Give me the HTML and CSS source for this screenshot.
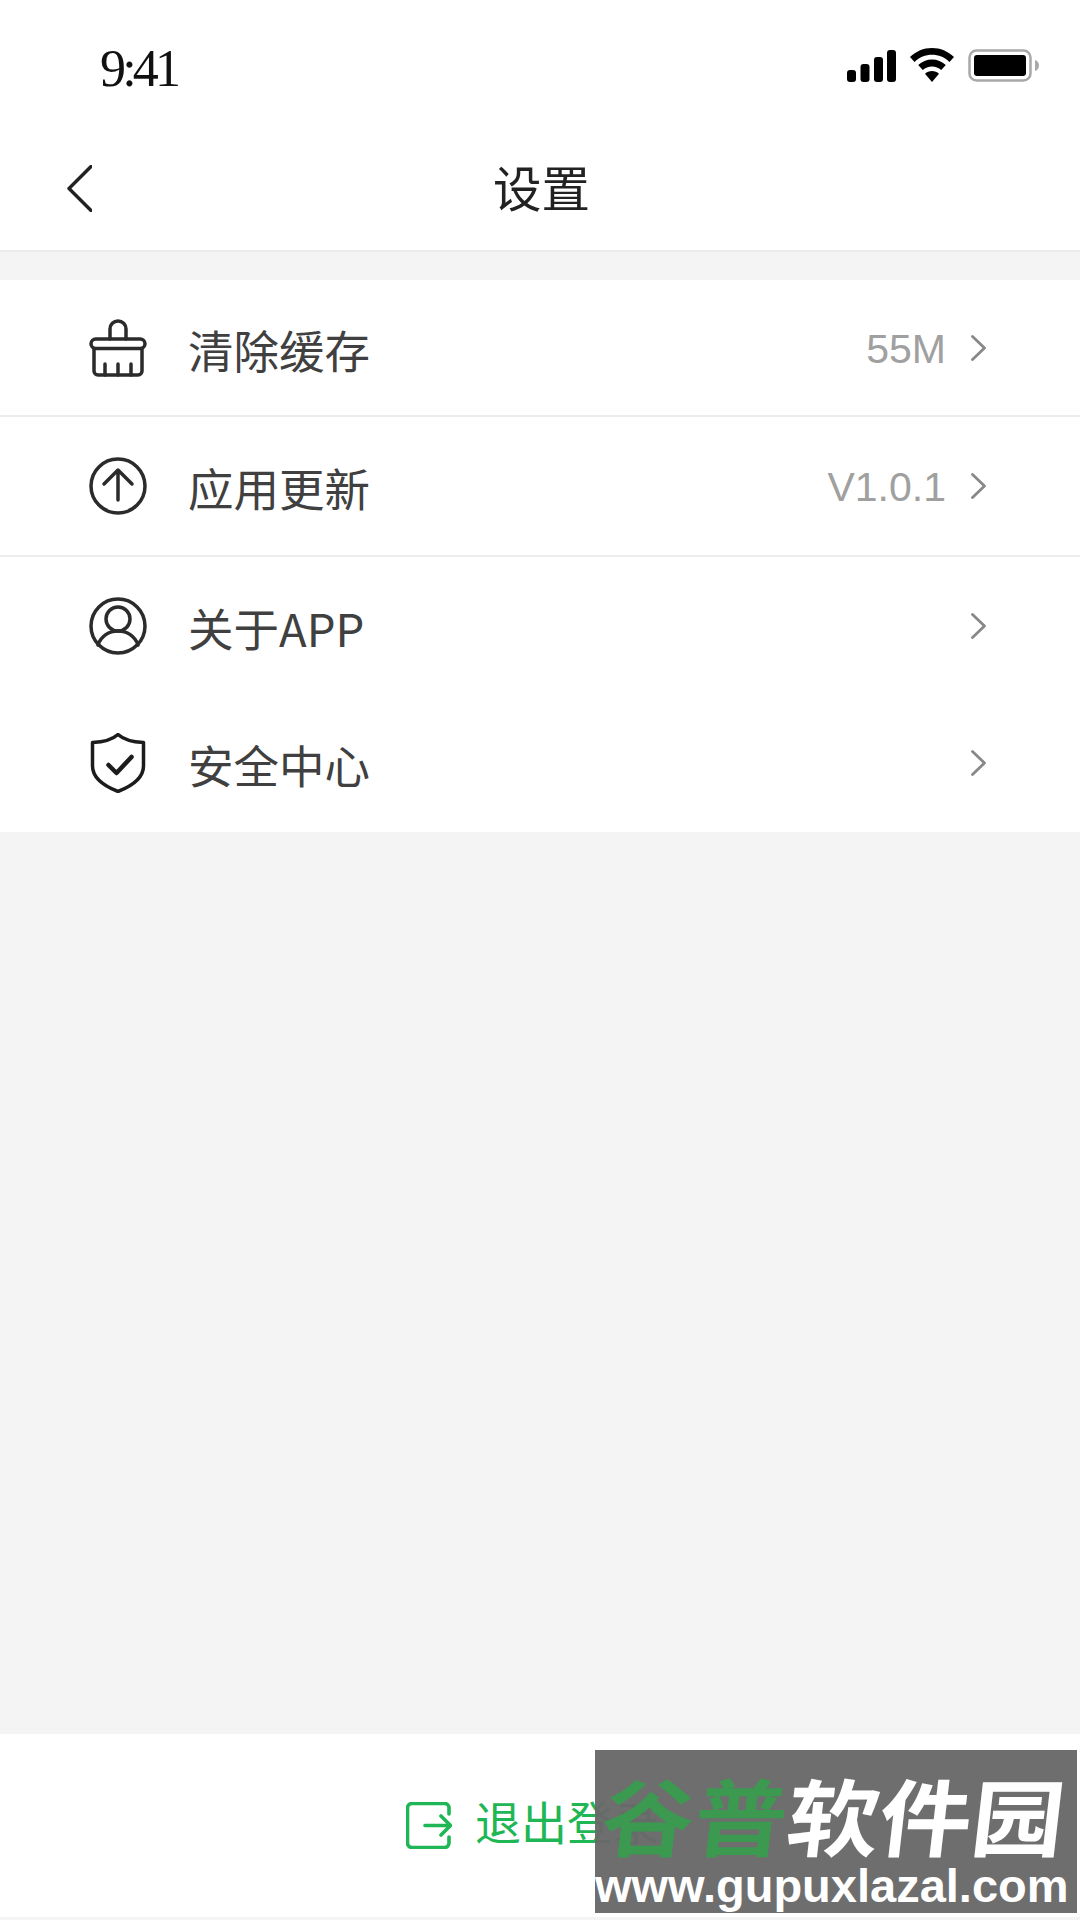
FILE: index.html
```html
<!DOCTYPE html>
<html lang="zh-CN">
<head>
<meta charset="utf-8">
<title>设置</title>
<link rel="stylesheet" href="styles.css">
</head>
<body>
<div class="page">
  <header class="top">
    <div class="status">
      <span class="time">9:41</span>
      <div class="status-icons">
        <svg class="sig" viewBox="0 0 49 32"><rect x="0" y="20" width="9" height="12" rx="3"/><rect x="13.500" y="14" width="9" height="18" rx="3"/><rect x="27" y="7" width="9" height="25" rx="3"/><rect x="40" y="0" width="9" height="32" rx="3"/></svg>
        <svg class="wifi" viewBox="0 0 44 34"><path d="M22 0C13.500 0 6 3.300 0 9l4.500 5C9.500 9.300 15.500 6.800 22 6.800S34.500 9.300 39.500 14L44 9C38 3.300 30.500 0 22 0z"/><path d="M22 11.500c-5.200 0-10 2-13.800 5.500l4.600 5c2.500-2.200 5.700-3.600 9.200-3.600s6.700 1.400 9.200 3.600l4.600-5C32 13.500 27.200 11.500 22 11.500z"/><path d="M22 23c-2.700 0-5.100 1-7 2.700L22 34l7-8.300C27.100 24 24.700 23 22 23z"/></svg>
        <svg class="batt" viewBox="0 0 71 33"><rect x="1.500" y="1.500" width="61" height="30" rx="7" fill="none" stroke="#a8a8a8" stroke-width="2.500"/><rect x="6" y="6" width="52" height="21" rx="3"/><path d="M67 11c2.500.8 4 3 4 5.500S69.500 21.200 67 22z" fill="#a8a8a8"/></svg>
      </div>
    </div>
    <nav class="nav">
      <svg class="back" viewBox="0 0 25 47"><path d="M24 1.500 2 23.500l22 22" fill="none" stroke="#222" stroke-width="3.400" stroke-linecap="round" stroke-linejoin="round"/></svg>
      <h1 class="title">设置</h1>
    </nav>
  </header>

  <main class="main">
    <section class="list">
      <div class="row row-a">
        <svg class="ico" viewBox="0 0 58 58"><g fill="none" stroke="#2b2b2b" stroke-width="3.500" stroke-linecap="round" stroke-linejoin="round"><path d="M21 20V10a8 8 0 0 1 16 0V20"/><rect x="2" y="20" width="54" height="9.500" rx="4.700"/><path d="M5 29.500V52a4 4 0 0 0 4 4h40a4 4 0 0 0 4-4V29.500"/><path d="M16 56V45M29 56V45M42 56V45"/></g></svg>
        <span class="label">清除缓存</span>
        <span class="value">55M</span>
        <svg class="chev" viewBox="0 0 15 26"><path d="M1.500 1.500 13.500 13 1.500 24.500" fill="none" stroke="#888" stroke-width="2.800" stroke-linecap="round" stroke-linejoin="round"/></svg>
      </div>
      <div class="row row-b">
        <svg class="ico" viewBox="0 0 58 58"><g fill="none" stroke="#2b2b2b" stroke-width="3.500" stroke-linecap="round" stroke-linejoin="round"><circle cx="29" cy="29" r="27"/><path d="M29 43V14M15 27 29 13l14 14"/></g></svg>
        <span class="label">应用更新</span>
        <span class="value">V1.0.1</span>
        <svg class="chev" viewBox="0 0 15 26"><path d="M1.500 1.500 13.500 13 1.500 24.500" fill="none" stroke="#888" stroke-width="2.800" stroke-linecap="round" stroke-linejoin="round"/></svg>
      </div>
      <div class="row row-c">
        <svg class="ico" viewBox="0 0 58 58"><g fill="none" stroke="#2b2b2b" stroke-width="3.500" stroke-linecap="round" stroke-linejoin="round"><circle cx="29" cy="29" r="27"/><circle cx="29" cy="22" r="12"/><path d="M9 48c3-9 11-14 20-14s17 5 20 14"/></g></svg>
        <span class="label">关于APP</span>
        <svg class="chev" viewBox="0 0 15 26"><path d="M1.500 1.500 13.500 13 1.500 24.500" fill="none" stroke="#888" stroke-width="2.800" stroke-linecap="round" stroke-linejoin="round"/></svg>
      </div>
      <div class="row row-d">
        <svg class="ico" viewBox="0 0 58 60"><g fill="none" stroke="#1c1c1c" stroke-width="3.500" stroke-linecap="round" stroke-linejoin="round"><path d="M29 1.500C24 6 15 9 3.500 9.500V33C3.500 45 15 53 29 58.500 43 53 54.500 45 54.500 33V9.500C43 9 34 6 29 1.500z"/><path d="M19.500 32l8 8L42.500 24" stroke-width="4.500"/></g></svg>
        <span class="label">安全中心</span>
        <svg class="chev" viewBox="0 0 15 26"><path d="M1.500 1.500 13.500 13 1.500 24.500" fill="none" stroke="#888" stroke-width="2.800" stroke-linecap="round" stroke-linejoin="round"/></svg>
      </div>
    </section>
  </main>

  <footer class="foot">
    <svg class="out" viewBox="0 0 46 47"><g fill="none" stroke="#1fb655" stroke-width="3.600" stroke-linecap="round" stroke-linejoin="round"><path d="M43 12V6a4.500 4.500 0 0 0-4.500-4.500H6A4.500 4.500 0 0 0 1.500 6v35A4.500 4.500 0 0 0 6 45.500h32.500A4.500 4.500 0 0 0 43 41v-6"/><path d="M19 23.500h25M35 14l9.500 9.500L35 33"/></g></svg>
    <span class="logout">退出登录</span>
  </footer>

  <aside class="mark">
    <div class="mark-cn"><span class="mark-green">谷普</span>软件园</div>
    <div class="mark-url">www.gupuxlazal.com</div>
  </aside>
</div>
</body>
</html>
```
FILE: styles.css
```css
* { box-sizing: border-box; }
html, body { margin: 0; padding: 0; }
body { background: #f4f4f4; font-family: "Noto Sans CJK SC", "Noto Sans", sans-serif; color: #333; }
.page { position: relative; width: 1080px; height: 1920px; display: flex; flex-direction: column; overflow: hidden; }

.top { background: #fff; border-bottom: 2px solid #ebebeb; height: 252px; flex: none; }
.status { height: 116px; padding: 44px 41px 0 100px; display: flex; justify-content: space-between; align-items: flex-start; }
.time { font-family: "Liberation Serif", serif; font-size: 52px; line-height: 50px; letter-spacing: -3.800px; color: #111; }
.status-icons { display: flex; align-items: flex-start; margin-top: 5px; }
.status-icons svg { display: block; }
.sig { width: 49px; height: 32px; margin-top: 1px; margin-right: 14px; }
.wifi { width: 44px; height: 34px; margin-top: -1px; margin-right: 14px; }
.batt { width: 71px; height: 33px; }

.nav { height: 134px; position: relative; display: flex; align-items: center; justify-content: center; }
.back { position: absolute; left: 67px; top: 49px; width: 25px; height: 47px; }
.title { margin: 0 0 0 3px; font-size: 48.500px; font-weight: 400; line-height: 64px; color: #222; position: relative; top: 3px; }

.main { flex: 1; padding-top: 28px; }
.list { background: #fff; height: 552px; display: flex; flex-direction: column; }
.row { display: flex; align-items: center; padding: 0 94px 0 89px; flex: none; }
.row-a { height: 137px; border-bottom: 2px solid #ececec; }
.row-b { height: 140px; border-bottom: 2px solid #ececec; }
.row-c { height: 137px; }
.row-d { height: 138px; }
.ico { width: 58px; height: 58px; flex: none; }
.row-d .ico { height: 60px; }
.label { margin-left: 41px; font-size: 45.500px; line-height: 60px; color: #404040; font-weight: 400; position: relative; top: 1px; flex: 1; }
.value { font-family: "Liberation Sans", Arial, sans-serif; font-size: 41px; line-height: 60px; color: #a0a0a0; margin-right: 25px; position: relative; top: 1px; }
.chev { width: 15px; height: 26px; flex: none; }

.foot { background: #fff; height: 183px; margin-bottom: 3px; flex: none; display: flex; align-items: center; padding-left: 406px; }
.out { width: 46px; height: 47px; flex: none; }
.logout { margin-left: 23px; font-size: 46px; line-height: 60px; color: #1fb655; font-weight: 400; position: relative; top: -6px; }

.mark { position: absolute; left: 595px; top: 1750px; width: 482px; height: 163px; background: rgba(104, 104, 104, .96); color: #fff; font-family: "Liberation Sans", sans-serif; overflow: hidden; }
.mark-cn { font-family: "Noto Sans CJK SC", sans-serif; font-weight: 700; font-size: 84px; line-height: 100px; height: 100px; white-space: nowrap; margin-top: 14px; margin-left: 8px; transform-origin: left center; transform: scaleX(1.100) skewX(-6deg); }
.mark-green { color: #3b9a50; }
.mark-url { font-weight: 700; font-size: 47px; line-height: 48px; white-space: nowrap; margin-top: -2px; }
```
